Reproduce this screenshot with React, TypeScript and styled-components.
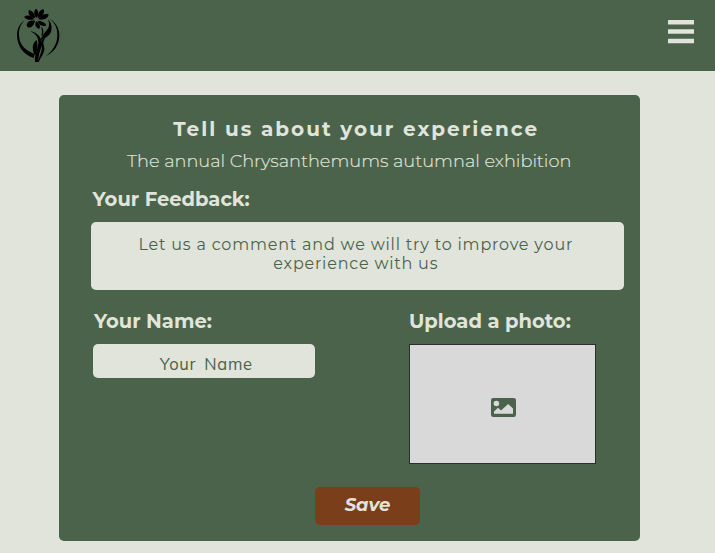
import React from 'react';
import styled, { createGlobalStyle } from 'styled-components';

const green = '#4a634a';
const cream = '#e1e4db';

const GlobalStyle = createGlobalStyle`
  * { box-sizing: border-box; }
  body {
    margin: 0;
    background: ${cream};
    font-family: Montserrat, Inter, "Open Sans", sans-serif;
    overflow: hidden;
  }
`;

const Header = styled.header`
  display: flex;
  justify-content: space-between;
  align-items: flex-start;
  height: 71px;
  padding: 8px 21px 0 16px;
  background: ${green};
`;

const Logo = styled.svg`
  display: block;
  width: 44px;
  height: 55px;
`;

const MenuIcon = styled.svg`
  display: block;
  width: 26px;
  height: 25px;
`;

const MenuButton = styled.button`
  margin-top: 11px;
  padding: 0;
  border: 0;
  background: none;
`;

const Card = styled.form`
  width: 581px;
  height: 446px;
  margin: 24px 0 0 59px;
  padding: 22px 16px 0 32px;
  border-radius: 5px;
  background: ${green};
  color: ${cream};
`;

const Title = styled.h1`
  margin: 0;
  padding-right: 2.5px;
  font-size: 20px;
  font-weight: 700;
  line-height: 24px;
  letter-spacing: 2px;
  text-align: center;
  white-space: nowrap;
`;

const Subtitle = styled.p`
  margin: 8px 16.5px 0 0;
  font-size: 17.73px;
  font-weight: 300;
  line-height: 24px;
  text-align: center;
  white-space: nowrap;
  -webkit-text-stroke: 0.15px ${cream};
`;

const Label = styled.label<{ $inset: number }>`
  display: block;
  padding-left: ${(p) => p.$inset}px;
  font-size: 19.5px;
  font-weight: 700;
  line-height: 24px;
  white-space: nowrap;
`;

const FeedbackGroup = styled.section`
  margin-top: 14px;
`;

const FeedbackBox = styled.div`
  height: 67.6px;
  margin-top: 11px;
  padding: 12.5px 3.4px 0 0;
  border-radius: 5px;
  background: ${cream};
  color: ${green};
  font-size: 16px;
  font-weight: 400;
  line-height: 19.5px;
  letter-spacing: 0.8px;
  text-align: center;
  white-space: nowrap;
`;

const Columns = styled.div`
  display: grid;
  grid-template-columns: 316.4px 188px;
  margin-top: 19.4px;
  padding-left: 1.6px;
`;

const NameBox = styled.div`
  width: 222.4px;
  height: 34.4px;
  margin-top: 11px;
  padding: 9px 0 0 5px;
  border-radius: 5px;
  background: ${cream};
  color: ${green};
  font-family: Mulish, "Noto Sans", sans-serif;
  font-size: 16.5px;
  line-height: 22px;
  letter-spacing: 0.7px;
  word-spacing: 3px;
  text-align: center;
`;

const PhotoBox = styled.div`
  display: flex;
  justify-content: center;
  width: 187px;
  height: 119.6px;
  margin-top: 11px;
  padding: 53px 0 0 2px;
  border: 1px solid #2b302b;
  background: #d9d9d9;
`;

const PhotoIcon = styled.svg`
  display: block;
  width: 25px;
  height: 19px;
`;

const SaveButton = styled.button`
  display: block;
  width: 105px;
  height: 38px;
  margin: 23.4px 0 0 224px;
  padding: 0 0 2px;
  border: 0;
  border-radius: 5px;
  background: #7a3e1a;
  color: ${cream};
  font: italic 700 18px/36px Montserrat, "Open Sans", sans-serif;
`;

export default function App() {
  return (
    <>
      <GlobalStyle />
      <Header>
        <Logo viewBox="48 24 132 165" aria-label="Flower logo">
          <path d="M74 61C57 73 51 88 51 106C52 139 70 164 101 174L104 162C76 151 58 136 57 105C56 87 62 73 74 61Z" />
          <path d="M145 55C163 65 172 83 172 105C172 132 158 153 137 169C163 157 178 134 178 106C178 83 165 64 145 55Z" />
          <path d="M109 54C101 45 100 32 108 26C117 32 116 45 109 54Z" />
          <path d="M105 55C90 52 82 41 87 30C98 32 105 43 105 55Z" />
          <path d="M113 55C112 42 119 29 130 27C137 39 125 50 113 55Z" />
          <path d="M115 58C121 46 133 40 146 43C144 57 129 62 115 58Z" />
          <path d="M103 58C94 46 82 43 72 51C79 60 91 61 103 58Z" />
          <path d="M105 62C91 59 80 66 80 75C82 89 100 84 105 62Z" />
          <path d="M109 64C103 72 105 83 117 87C123 80 119 70 109 64Z" />
          <path d="M113 62C117 74 126 81 138 77C138 68 126 63 113 62Z" />
          <path d="M126 81C130 90 132 95 128 106L124 109C126 100 127 92 124 83Z" />
          <path d="M143 57C159 71 160 100 139 112C132 115 128 117 123 122C123 106 142 92 146 81C148 73 148 65 143 57Z" />
          <path d="M91 94C112 97 125 112 125 130C125 150 112 163 117 186L105 186C103 163 114 147 115 128C115 111 106 101 91 94Z" />
          <path d="M105 166C95 149 96 129 110 120C114 138 113 150 105 166Z" />
          <path d="M137 113C130 122 128 128 132 139C137 157 123 171 116 186C116 167 128 153 125 140C120 126 126 116 137 113Z" />
        </Logo>
        <MenuButton type="button" aria-label="Menu">
          <MenuIcon viewBox="0 0 26 25" fill={cream}>
            <rect y="1" width="26.2" height="4.5" rx="0.5" />
            <rect y="10.3" width="26.2" height="4.4" rx="0.5" />
            <rect y="19.8" width="26.2" height="4.5" rx="0.5" />
          </MenuIcon>
        </MenuButton>
      </Header>
      <Card>
        <Title>Tell us about your experience</Title>
        <Subtitle>The annual Chrysanthemums autumnal exhibition</Subtitle>
        <FeedbackGroup>
          <Label $inset={1.6}>Your Feedback:</Label>
          <FeedbackBox>
            Let us a comment and we will try to improve your
            <br />
            experience with us
          </FeedbackBox>
        </FeedbackGroup>
        <Columns>
          <div>
            <Label $inset={1.4}>Your Name:</Label>
            <NameBox>Your Name</NameBox>
          </div>
          <div>
            <Label $inset={0}>Upload a photo:</Label>
            <PhotoBox>
              <PhotoIcon viewBox="0 0 25 19">
                <rect width="25" height="19" rx="2.2" fill={green} />
                <circle cx="5.4" cy="5.5" r="2.8" fill="#d9d9d9" />
                <path d="M3 15.8V13.5L7 9.8L10 12.5L17.2 6L22 10.5V15.8Z" fill="#d9d9d9" />
              </PhotoIcon>
            </PhotoBox>
          </div>
        </Columns>
        <SaveButton type="button">Save</SaveButton>
      </Card>
    </>
  );
}
